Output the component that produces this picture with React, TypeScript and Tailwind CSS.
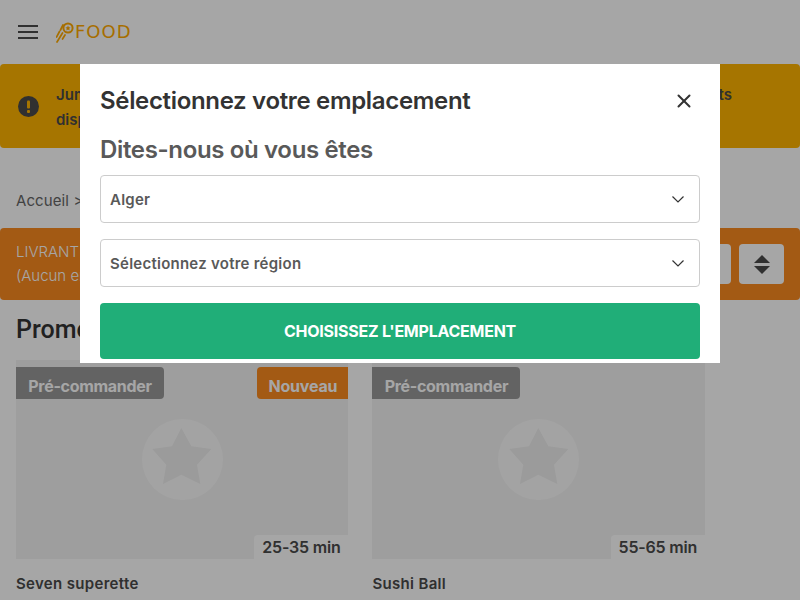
import React from 'react';
import { X } from 'lucide-react';

const cards = [
  { name: 'Seven superette', time: '25-35 min', isNew: true },
  { name: 'Sushi Ball', time: '55-65 min', isNew: false },
];

function Chevron() {
  return (
    <svg width="12" height="7" viewBox="0 0 12 7" fill="none" stroke="#333333" strokeWidth="1.200">
      <path d="M.5.5L6 6l5.500-5.500" />
    </svg>
  );
}

function Logo() {
  return (
    <div className="flex items-center">
      <svg width="18" height="22" viewBox="1 0 18 22" fill="none">
        <circle cx="13" cy="7" r="4.600" stroke="#ffaa00" strokeWidth="2" />
        <path d="M13 4.600l.8 1.600 1.800.2-1.300 1.200.3 1.800-1.600-.9-1.600.9.300-1.800-1.300-1.200 1.800-.2z" fill="#ffaa00" />
        <path d="M8 4L5.500 9M7.500 12L2 21M4.500 10.500L1.500 16M10 14l-2.500 4" stroke="#ffaa00" strokeWidth="1.700" strokeLinecap="round" />
      </svg>
      <span className="ml-[1px] font-['DejaVu_Sans'] text-[18px] leading-none tracking-[1px] text-[#ffaa00]">FOOD</span>
    </div>
  );
}

function Card({ name, time, isNew }: { name: string; time: string; isNew: boolean }) {
  return (
    <div className="w-[332.4px]">
      <div className="relative flex h-[199px] items-center justify-center bg-[#f3f3f3]">
        <div className="flex h-[81px] w-[81px] items-center justify-center rounded-full bg-[#fbfbfb]">
          <svg width="60" height="57" viewBox="0 0 60 57" className="mb-[6px]">
            <path d="M29.300 0l10 18.300 20 2.700-14.300 15.700 3.300 19.300-19-9.300L11 56l3.300-19.300L.3 21 20 18.300z" fill="#eeeeee" />
          </svg>
        </div>
        <span className="absolute top-[7px] left-0 flex h-[32px] w-[148px] items-center justify-center rounded-r bg-[#999999] pt-[6px] font-bold tracking-[-0.3px] text-white">Pré-commander</span>
        {isNew && (
          <span className="absolute top-[7px] right-0 flex h-[32px] w-[91px] items-center justify-center rounded-l bg-[#fb8a1f] pt-[6px] font-bold tracking-[-0.2px] text-white">Nouveau</span>
        )}
        <span className="absolute right-0 bottom-0 flex h-[24px] w-[94px] items-center justify-center rounded-tl bg-white font-semibold tracking-[-0.2px] text-[#4a4a4a]">{time}</span>
      </div>
      <div className="mt-[14px] text-[15px] font-semibold tracking-[0.33px] text-[#4a4a4a]">{name}</div>
    </div>
  );
}

export default function App() {
  return (
    <div className="relative h-screen overflow-hidden bg-white font-['Inter','Liberation_Sans',sans-serif] text-[#4a4a4a]">
      <header className="flex h-16 items-center pl-[18px]">
        <div className="flex w-5 flex-col gap-[4px]">
          <span className="h-[2px] bg-[#4a4a4a]" />
          <span className="h-[2px] bg-[#4a4a4a]" />
          <span className="h-[2px] bg-[#4a4a4a]" />
        </div>
        <div className="ml-[18px]"><Logo /></div>
      </header>

      <div className="flex h-[84px] items-center rounded bg-[#ffb400] pr-[68px] pl-[18px]">
        <svg width="21" height="21" viewBox="0 0 21 21" className="shrink-0">
          <circle cx="10.500" cy="10.500" r="10.500" fill="#4a4a4a" />
          <rect x="9" y="4.500" width="3" height="8" rx="1" fill="#ffb400" />
          <rect x="9" y="14" width="3" height="3" rx="1" fill="#ffb400" />
        </svg>
        <div className="ml-[17px] flex-1 pt-[2px] text-[15px] leading-[25px] font-semibold">
          <div className="flex justify-between">
            <span>Jumia Food vous informe que</span>
            <span>certains restaurants</span>
          </div>
          <div>disponibles peuvent varier</div>
        </div>
      </div>

      <div className="mt-[43px] px-4 text-[15px] leading-5 tracking-[0.1px] text-[#666666]">Accueil &gt; Restaurants</div>

      <div className="mt-[17px] flex h-[72px] items-center justify-between rounded bg-[#fb8a1f] px-4 text-[15px] leading-6 font-light text-white">
        <div>
          <div>LIVRANT À</div>
          <div>(Aucun emplacement)</div>
        </div>
        <div className="flex gap-2">
          <div className="h-10 w-[120px] rounded bg-white" />
          <div className="flex h-10 w-[45px] flex-col items-center justify-center gap-[3px] rounded bg-white">
            <span className="h-0 w-0 border-x-[8px] border-b-[8px] border-x-transparent border-b-[#4a4a4a]" />
            <span className="h-0 w-0 border-x-[8px] border-t-[8px] border-x-transparent border-t-[#4a4a4a]" />
          </div>
        </div>
      </div>

      <h2 className="mt-4 px-4 font-['Roboto',sans-serif] text-[25px] leading-[28px] font-medium text-[#333333]">Promotions</h2>

      <div className="mt-4 flex gap-6 px-4">
        {cards.map((c) => (
          <Card key={c.name} {...c} />
        ))}
      </div>

      <div className="fixed inset-0 flex justify-center bg-black/35 pt-16">
        <div className="h-[299px] w-[640px] bg-white px-5 pt-[21px]">
          <div className="flex h-8 items-center justify-between">
            <h3 className="text-2xl font-semibold tracking-[-0.33px] text-[#333333]">Sélectionnez votre emplacement</h3>
            <X size={22} strokeWidth={2.2} className="mr-[5px] text-[#333333]" />
          </div>
          <h4 className="mt-[17px] text-2xl leading-8 font-semibold tracking-[-0.35px] text-[#595959]">Dites-nous où vous êtes</h4>
          <div className="mt-[9px] flex h-12 items-center justify-between rounded-sm border border-[#cccccc] pr-[15px] pl-[9px] text-[15px] font-semibold tracking-[0.25px] text-[#595959]">
            <span className="mt-[3px]">Alger</span>
            <Chevron />
          </div>
          <div className="mt-4 flex h-12 items-center justify-between rounded-sm border border-[#cccccc] pr-[15px] pl-[9px] text-[15px] font-semibold tracking-[0.25px] text-[#595959]">
            <span className="mt-[3px]">Sélectionnez votre région</span>
            <Chevron />
          </div>
          <button className="mt-4 h-14 w-full rounded-sm bg-[#20ae78] font-bold tracking-[-0.25px] text-white uppercase">Choisissez l'emplacement</button>
        </div>
      </div>
    </div>
  );
}
